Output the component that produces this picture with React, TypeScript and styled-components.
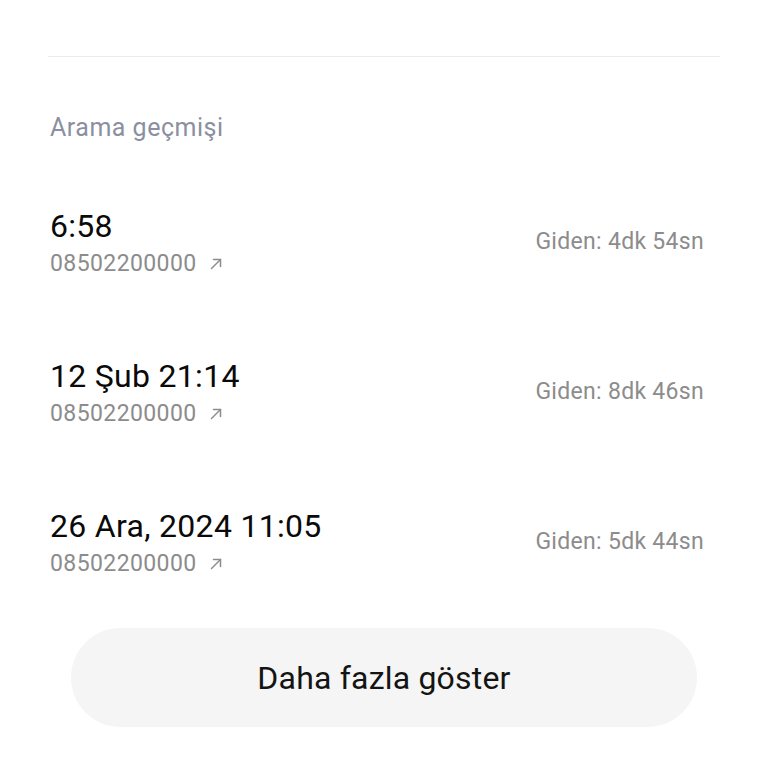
import React from "react";
import styled, { createGlobalStyle } from "styled-components";

const Global = createGlobalStyle`
  html, body { margin: 0; padding: 0; background: #ffffff; }
  body { font-family: Roboto, "Noto Sans", sans-serif; }
`;

const Page = styled.div`
  width: 768px;
  height: 768px;
  box-sizing: border-box;
  padding: 56px 0 0 0;
  display: flex;
  flex-direction: column;
  background: #ffffff;
  overflow: hidden;
`;

const Divider = styled.div`
  margin: 0 48px;
  height: 1px;
  background: #ececee;
`;

const Heading = styled.div`
  margin: 56px 0 0 50px;
  font-size: 25px;
  line-height: 30px;
  color: #8b8fa1;
  letter-spacing: 0.5px;
`;

const List = styled.div`
  margin-top: 26px;
  display: flex;
  flex-direction: column;
`;

const Row = styled.div`
  height: 150px;
  box-sizing: border-box;
  padding: 0 64px 0 50px;
  display: flex;
  align-items: center;
  justify-content: space-between;
`;

const Info = styled.div`
  display: flex;
  flex-direction: column;
`;

const Title = styled.div`
  font-size: 32px;
  line-height: 34px;
  color: #0a0a0a;
  letter-spacing: 0.3px;
`;

const Number = styled.div`
  margin-top: 5px;
  display: flex;
  align-items: center;
  gap: 12px;
  font-size: 23px;
  line-height: 32px;
  color: #8c8c8c;
  letter-spacing: 0.4px;
`;

const Duration = styled.div`
  font-size: 23px;
  line-height: 30px;
  color: #8c8c8c;
  letter-spacing: 0.3px;
  margin-bottom: 4px;
`;

const ButtonWrap = styled.div`
  margin-top: 9px;
  padding: 0 71px;
`;

const MoreButton = styled.button`
  width: 100%;
  height: 99px;
  border: none;
  border-radius: 50px;
  background: #f5f5f5;
  font-family: Roboto, "Noto Sans", sans-serif;
  font-size: 32px;
  letter-spacing: 0.2px;
  color: #141414;
  padding: 0;
`;

const Arrow = () => (
  <svg width="14" height="14" viewBox="0 0 14 14" fill="none" stroke="#8c8c8c" strokeWidth="1.5" strokeLinecap="round" strokeLinejoin="round">
    <path d="M2.5 11.5 L11.5 2.5" />
    <path d="M4.5 2.5 H11.5 V9.5" />
  </svg>
);

const calls = [
  { when: "6:58", num: "08502200000", dur: "Giden: 4dk 54sn" },
  { when: "12 Şub 21:14", num: "08502200000", dur: "Giden: 8dk 46sn" },
  { when: "26 Ara, 2024 11:05", num: "08502200000", dur: "Giden: 5dk 44sn" },
];

export default function App() {
  return (
    <>
      <Global />
      <Page>
        <Divider />
        <Heading>Arama geçmişi</Heading>
        <List>
          {calls.map((c, i) => (
            <Row key={i}>
              <Info>
                <Title>{c.when}</Title>
                <Number>
                  {c.num}
                  <Arrow />
                </Number>
              </Info>
              <Duration>{c.dur}</Duration>
            </Row>
          ))}
        </List>
        <ButtonWrap>
          <MoreButton>Daha fazla göster</MoreButton>
        </ButtonWrap>
      </Page>
    </>
  );
}
